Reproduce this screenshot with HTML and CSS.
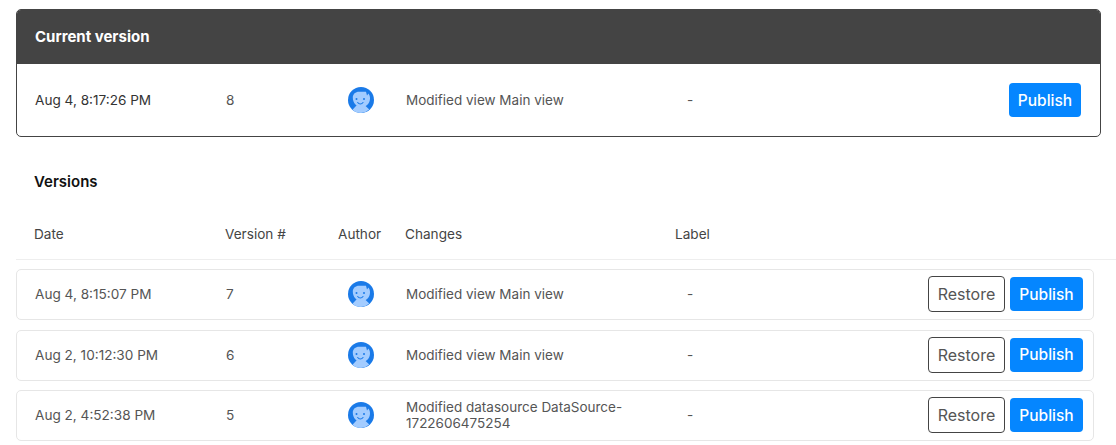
FILE: index.html
```html
<!DOCTYPE html>
<html lang="en">
<head>
<meta charset="utf-8">
<title>Versions</title>
<link rel="stylesheet" href="styles.css">
</head>
<body>
<svg class="defs" width="0" height="0" aria-hidden="true">
  <symbol id="avatar" viewBox="0 0 26 26">
    <circle cx="13" cy="13" r="13" fill="#1a7ae8"/>
    <path d="M4.500 22.800 8.500 18.500h8.500l4.300 4.100A13 13 0 0 1 13 26a13 13 0 0 1-8.500-3.200Z" fill="#a3ccff"/>
    <path d="M4.800 10.500C4.800 7 7.500 4.700 11 4.700h7l1 3.800 1.500-2C21.500 8 22 9.500 22 11.500c0 5-4 8.500-8.700 8.500-4.800 0-8.500-4-8.500-9.500Z" fill="#a3ccff"/>
    <circle cx="8.500" cy="12" r="1" fill="#1a7ae8"/>
    <circle cx="16" cy="12" r="1" fill="#1a7ae8"/>
    <path d="M9.700 15.500c1.400 2 3.900 2 5.300 0" fill="none" stroke="#1a7ae8" stroke-width="1.100" stroke-linecap="round"/>
  </symbol>
</svg>
<main class="page">
  <section class="current">
    <h2 class="current-title">Current version</h2>
    <div class="row row-current">
      <span class="date">Aug 4, 8:17:26 PM</span>
      <span>8</span>
      <svg class="avatar"><use href="#avatar"/></svg>
      <span class="change">Modified view Main view</span>
      <span>-</span>
      <div class="actions"><button class="btn btn-publish">Publish</button></div>
    </div>
  </section>

  <h2 class="versions-title">Versions</h2>

  <div class="thead">
    <span>Date</span>
    <span>Version #</span>
    <span>Author</span>
    <span>Changes</span>
    <span>Label</span>
  </div>

  <div class="list">
    <div class="row card">
      <span>Aug 4, 8:15:07 PM</span>
      <span>7</span>
      <svg class="avatar"><use href="#avatar"/></svg>
      <span class="change">Modified view Main view</span>
      <span>-</span>
      <div class="actions"><button class="btn btn-restore">Restore</button><button class="btn btn-publish">Publish</button></div>
    </div>
    <div class="row card">
      <span>Aug 2, 10:12:30 PM</span>
      <span>6</span>
      <svg class="avatar"><use href="#avatar"/></svg>
      <span class="change">Modified view Main view</span>
      <span>-</span>
      <div class="actions"><button class="btn btn-restore">Restore</button><button class="btn btn-publish">Publish</button></div>
    </div>
    <div class="row card">
      <span>Aug 2, 4:52:38 PM</span>
      <span>5</span>
      <svg class="avatar"><use href="#avatar"/></svg>
      <span class="change change-wrap">Modified datasource DataSource-1722606475254</span>
      <span>-</span>
      <div class="actions"><button class="btn btn-restore">Restore</button><button class="btn btn-publish">Publish</button></div>
    </div>
  </div>
</main>
</body>
</html>
```

FILE: styles.css
```css
* { box-sizing: border-box; }
html, body { margin: 0; height: 445px; overflow: hidden; background: #fff; }
body { font-family: Inter, "Liberation Sans", sans-serif; font-size: 13.6px; color: #555; }
.defs { display: block; height: 0; }
.page { padding: 9px 0 0 16px; }

.current { width: 1085px; height: 128px; border: 1px solid #444; border-radius: 5px; overflow: hidden; }
.current-title { margin: 0; height: 54px; padding: 0 0 2px 18px; display: flex; align-items: center; background: #444; color: #fff; font-size: 15px; font-weight: 700; }

.row { display: grid; grid-template-columns: 191px 122px 58px 281px 1fr auto; align-items: center; padding-left: 18px; line-height: 16px; }
.row-current { height: 72px; padding-right: 19px; }
.row-current .date { color: #333; }
.change { font-size: 13.500px; }
.change-wrap { width: 240px; }

.versions-title { margin: 0; padding: 36px 0 0 18px; font-size: 15px; font-weight: 600; line-height: 18px; color: #111; }

.thead { width: 1100px; height: 51px; margin-top: 18px; display: grid; grid-template-columns: 191px 113px 67px 270px 1fr; align-items: center; border-bottom: 1px solid #eee; padding-left: 18px; color: #444; }

.list { display: flex; flex-direction: column; gap: 9.500px; margin-top: 9px; }
.card { width: 1078px; height: 51px; border: 1px solid #e6e6e6; border-radius: 5px; padding: 0 10px 1px 18px; }
.avatar { display: block; width: 26px; height: 26px; }

.actions { display: flex; align-items: center; gap: 5px; }
.btn { font-family: inherit; border-radius: 4px; cursor: pointer; display: block; padding: 0; }
.btn-publish { width: 72px; height: 34px; border: 0; background: #0586ff; color: #fff; font-size: 15.500px; font-weight: 500; }
.card .btn-publish { width: 73px; }
.btn-restore { width: 77px; height: 36px; border: 1px solid #444; background: #fff; color: #555; font-size: 16px; }
```
